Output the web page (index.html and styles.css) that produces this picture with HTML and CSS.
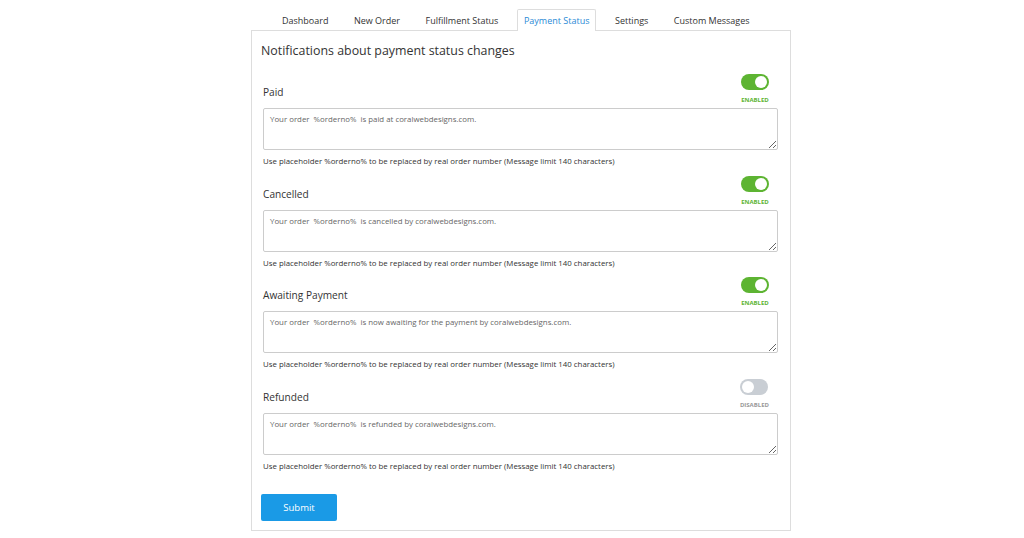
FILE: index.html
```html
<!DOCTYPE html>
<html lang="en">
<head>
    <meta charset="UTF-8">
    <meta name="viewport" content="width=device-width, initial-scale=1.0">
    <title>Payment Status Notifications</title>
    <link rel="stylesheet" href="styles.css">
</head>
<body>

    <div class="wrap">
        <!-- Tabs -->
        <ul class="tabs">
            <li class="tab">Dashboard</li>
            <li class="tab">New Order</li>
            <li class="tab">Fulfillment Status</li>
            <li class="tab active">Payment Status</li>
            <li class="tab">Settings</li>
            <li class="tab">Custom Messages</li>
        </ul>

        <!-- Panel -->
        <div class="panel">
            <h2>Notifications about payment status changes</h2>

            <div class="section">
                <div class="section-head">
                    <label>Paid</label>
                    <div class="switch-box">
                        <span class="switch on"><span class="knob"></span></span>
                        <span class="state on">ENABLED</span>
                    </div>
                </div>
                <textarea>Your order  %orderno%  is paid at coralwebdesigns.com.</textarea>
                <p class="help">Use placeholder %orderno% to be replaced by real order number (Message limit 140 characters)</p>
            </div>

            <div class="section">
                <div class="section-head">
                    <label>Cancelled</label>
                    <div class="switch-box">
                        <span class="switch on"><span class="knob"></span></span>
                        <span class="state on">ENABLED</span>
                    </div>
                </div>
                <textarea>Your order  %orderno%  is cancelled by coralwebdesigns.com.</textarea>
                <p class="help">Use placeholder %orderno% to be replaced by real order number (Message limit 140 characters)</p>
            </div>

            <div class="section">
                <div class="section-head">
                    <label>Awaiting Payment</label>
                    <div class="switch-box">
                        <span class="switch on"><span class="knob"></span></span>
                        <span class="state on">ENABLED</span>
                    </div>
                </div>
                <textarea>Your order  %orderno%  is now awaiting for the payment by coralwebdesigns.com.</textarea>
                <p class="help">Use placeholder %orderno% to be replaced by real order number (Message limit 140 characters)</p>
            </div>

            <div class="section">
                <div class="section-head">
                    <label>Refunded</label>
                    <div class="switch-box">
                        <span class="switch"><span class="knob"></span></span>
                        <span class="state">DISABLED</span>
                    </div>
                </div>
                <textarea>Your order  %orderno%  is refunded by coralwebdesigns.com.</textarea>
                <p class="help">Use placeholder %orderno% to be replaced by real order number (Message limit 140 characters)</p>
            </div>

            <button class="submit">Submit</button>
        </div>
    </div>

</body>
</html>
```

FILE: styles.css
```css
body {
    font-family: "Open Sans", "Liberation Sans", sans-serif;
    margin: 0;
    background: #fff;
    color: #333;
}

.wrap {
    width: 540px;
    margin: 0 auto;
    padding-top: 9px;
    transform: translateX(9px);
}

.tabs {
    list-style: none;
    margin: 0;
    padding: 0 0 0 24px;
    display: flex;
    gap: 11.5px;
    position: relative;
    z-index: 1;
}

.tab {
    font-size: 9px;
    line-height: 19px;
    padding: 1px 6px 1px;
    white-space: nowrap;
    color: #333;
    border: 1px solid transparent;
    border-bottom: none;
    margin-bottom: -1px;
}

.tab.active {
    color: #2a8ad6;
    border-color: #ddd;
    background: #fff;
    border-radius: 2px 2px 0 0;
}

.panel {
    border: 1px solid #ddd;
    padding: 9px 9px 9px;
}

h2 {
    font-size: 12.4px;
    font-weight: 400;
    line-height: 20px;
    margin: 1px 0 13px;
    color: #333;
}

.section {
    margin: 0 3px 8.7px 2px;
}

.section-head {
    display: flex;
    justify-content: space-between;
    align-items: flex-end;
}

.section-head label {
    font-size: 10.15px;
    line-height: 16px;
    padding-bottom: 4px;
}

.switch-box {
    display: flex;
    flex-direction: column;
    align-items: center;
    margin-right: 9px;
}

.switch {
    width: 28px;
    height: 16px;
    border-radius: 8px;
    background: #c9ced4;
    position: relative;
}

.switch .knob {
    position: absolute;
    top: 2px;
    left: 2px;
    width: 12px;
    height: 12px;
    border-radius: 50%;
    background: #fff;
}

.switch.on {
    background: #5db432;
}

.switch.on .knob {
    left: auto;
    right: 2px;
}

.state {
    font-size: 6px;
    font-weight: 700;
    line-height: 8px;
    margin-top: 6px;
    color: #999;
}

.state.on {
    color: #5db432;
}

textarea {
    display: block;
    box-sizing: border-box;
    width: 100%;
    height: 42px;
    margin-top: 4px;
    padding: 4px 6px;
    border: 1px solid #ccc;
    border-radius: 2px;
    font-family: inherit;
    font-size: 7.85px;
    line-height: 12px;
    color: #666;
    background: #fff;
}

.help {
    font-size: 7.85px;
    line-height: 12px;
    margin: 5px 0 0;
    color: #333;
}

.submit {
    margin-top: 13px;
    width: 76px;
    height: 27px;
    border: none;
    border-radius: 2px;
    background: #1a9ae6;
    color: #fff;
    font-family: inherit;
    font-size: 9.5px;
    cursor: pointer;
}
```
